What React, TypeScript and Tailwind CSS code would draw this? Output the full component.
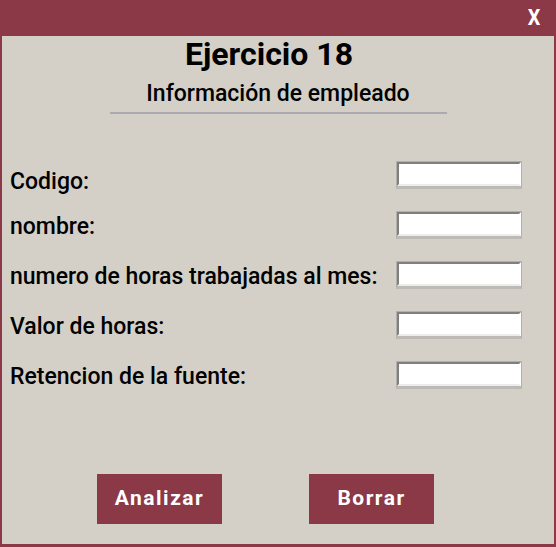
const fields = [
  { label: "Codigo:", shift: true },
  { label: "nombre:", shift: false },
  { label: "numero de horas trabajadas al mes:", shift: false },
  { label: "Valor de horas:", shift: false },
  { label: "Retencion de la fuente:", shift: false },
];

function TextBox() {
  // sunken swing-style text field
  return (
    <div className="w-[126px] h-[28px] border border-[#b3b0ab] border-b-[3px] border-b-[#bdbab5]">
      <div className="h-full bg-white border-t-2 border-l-2 border-[#7f7f7f] border-r-2 border-r-white border-b-2 border-b-[#ececec]" />
    </div>
  );
}

export default function App() {
  return (
    <div
      className="w-[556px] h-[547px] bg-[#8b3847] flex flex-col"
      style={{ fontFamily: "Roboto, 'Liberation Sans', sans-serif" }}
    >
      {/* Title bar */}
      <div className="h-[36px] flex items-center justify-end pr-[15px]">
        <span className="text-white text-[22px] font-bold leading-none scale-x-90">X</span>
      </div>

      {/* Body */}
      <div className="flex-1 ml-[2px] mr-[2px] mb-[3px] bg-[#d4d0c8] flex flex-col">
        <h1 className="text-center text-[32px] font-bold leading-[36px] text-black pr-[18px]">
          Ejercicio 18
        </h1>
        <p className="text-center text-[23px] font-medium leading-[28px] text-black mt-[8px]">
          Información de empleado
        </p>
        <div className="mx-auto mt-[4px] w-[337px] h-[2px] bg-[#abaab0]" />

        <div className="mt-[47px] flex flex-col gap-[22px]">
          {fields.map((f) => (
            <div key={f.label} className="h-[28px] flex items-center justify-between pl-[8px] pr-[32px]">
              <span
                className={`text-[23px] font-medium text-black leading-[28px] ${
                  f.shift ? "translate-y-[7px]" : "translate-y-[2px]"
                }`}
              >
                {f.label}
              </span>
              <TextBox />
            </div>
          ))}
        </div>

        <div className="mt-[85px] flex gap-[87px] pl-[95px]">
          <button className="w-[125px] h-[50px] bg-[#8b3847] text-white text-[21px] font-bold tracking-[1.5px]">
            Analizar
          </button>
          <button className="w-[125px] h-[50px] bg-[#8b3847] text-white text-[21px] font-bold tracking-[1.5px]">
            Borrar
          </button>
        </div>
      </div>
    </div>
  );
}
